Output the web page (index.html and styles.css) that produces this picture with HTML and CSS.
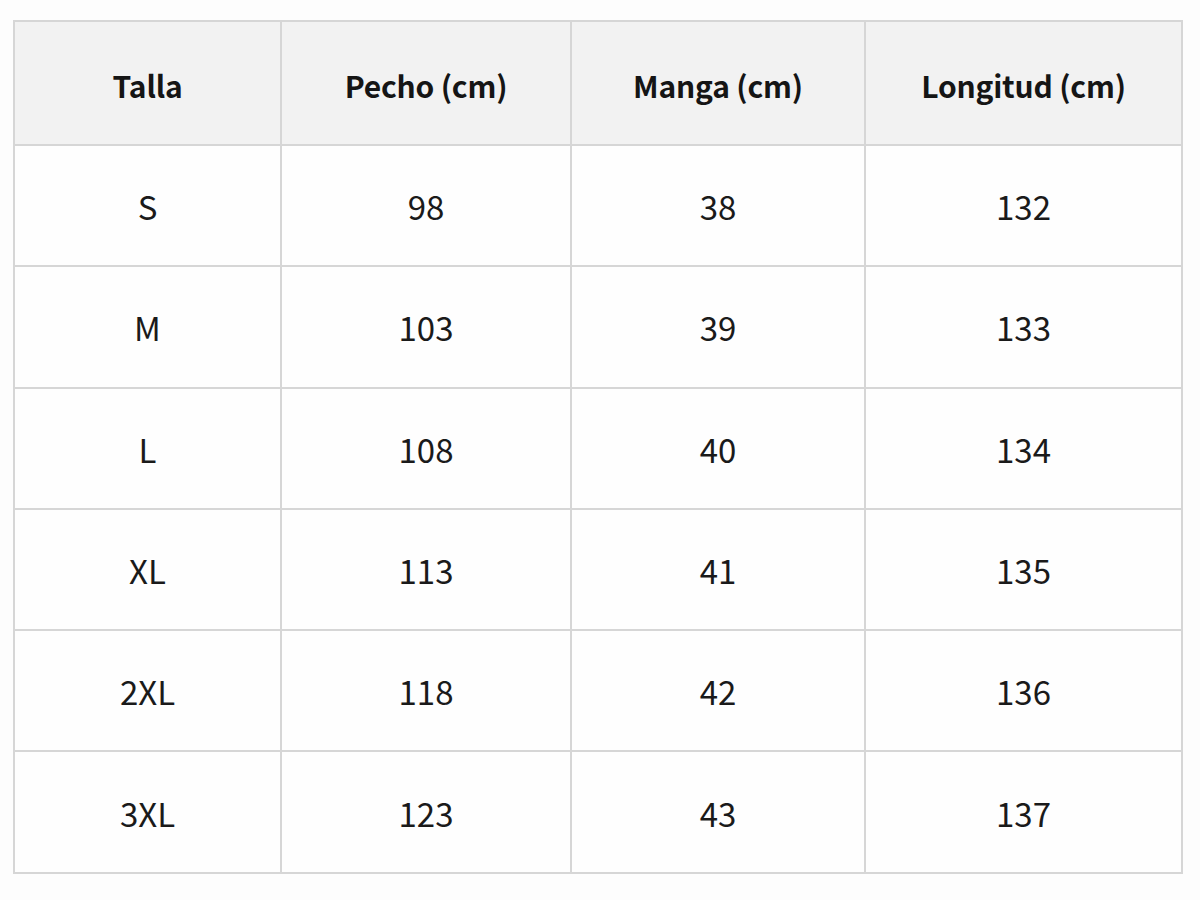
FILE: index.html
```html
<!DOCTYPE html>
<html lang="es">
<head>
<meta charset="utf-8">
<title>Tabla de tallas</title>
<link rel="stylesheet" href="styles.css">
</head>
<body>
<table class="sizes">
  <colgroup>
    <col class="c1"><col class="c2"><col class="c3"><col class="c4">
  </colgroup>
  <thead>
    <tr><th>Talla</th><th>Pecho (cm)</th><th>Manga (cm)</th><th>Longitud (cm)</th></tr>
  </thead>
  <tbody>
    <tr><td>S</td><td>98</td><td>38</td><td>132</td></tr>
    <tr><td>M</td><td>103</td><td>39</td><td>133</td></tr>
    <tr><td>L</td><td>108</td><td>40</td><td>134</td></tr>
    <tr><td>XL</td><td>113</td><td>41</td><td>135</td></tr>
    <tr><td>2XL</td><td>118</td><td>42</td><td>136</td></tr>
    <tr><td>3XL</td><td>123</td><td>43</td><td>137</td></tr>
  </tbody>
</table>
</body>
</html>
```
FILE: styles.css
```css
html, body {
  margin: 0;
  background: #fdfdfd;
}
body {
  padding: 20px 0 0 13px;
  font-family: "Noto Sans CJK SC", "Noto Sans", sans-serif;
  color: #1a1a1a;
}
.sizes {
  border-collapse: collapse;
  table-layout: fixed;
  width: 1168px;
}
.c1 { width: 267px; }
.c2 { width: 290px; }
.c3 { width: 294px; }
.c4 { width: 317px; }
.sizes th, .sizes td {
  border: 2px solid #d6d6d6;
  text-align: center;
  vertical-align: middle;
  padding: 0;
  line-height: 1;
}
.sizes th {
  height: 119px;
  padding-top: 3px;
  background: #f2f2f2;
  font-size: 30px;
  font-weight: 700;
  letter-spacing: -0.2px;
  color: #151515;
}
.sizes td {
  height: 117.3px;
  padding-top: 2px;
  font-size: 33px;
  font-weight: 400;
  background: #fefefe;
}
```
